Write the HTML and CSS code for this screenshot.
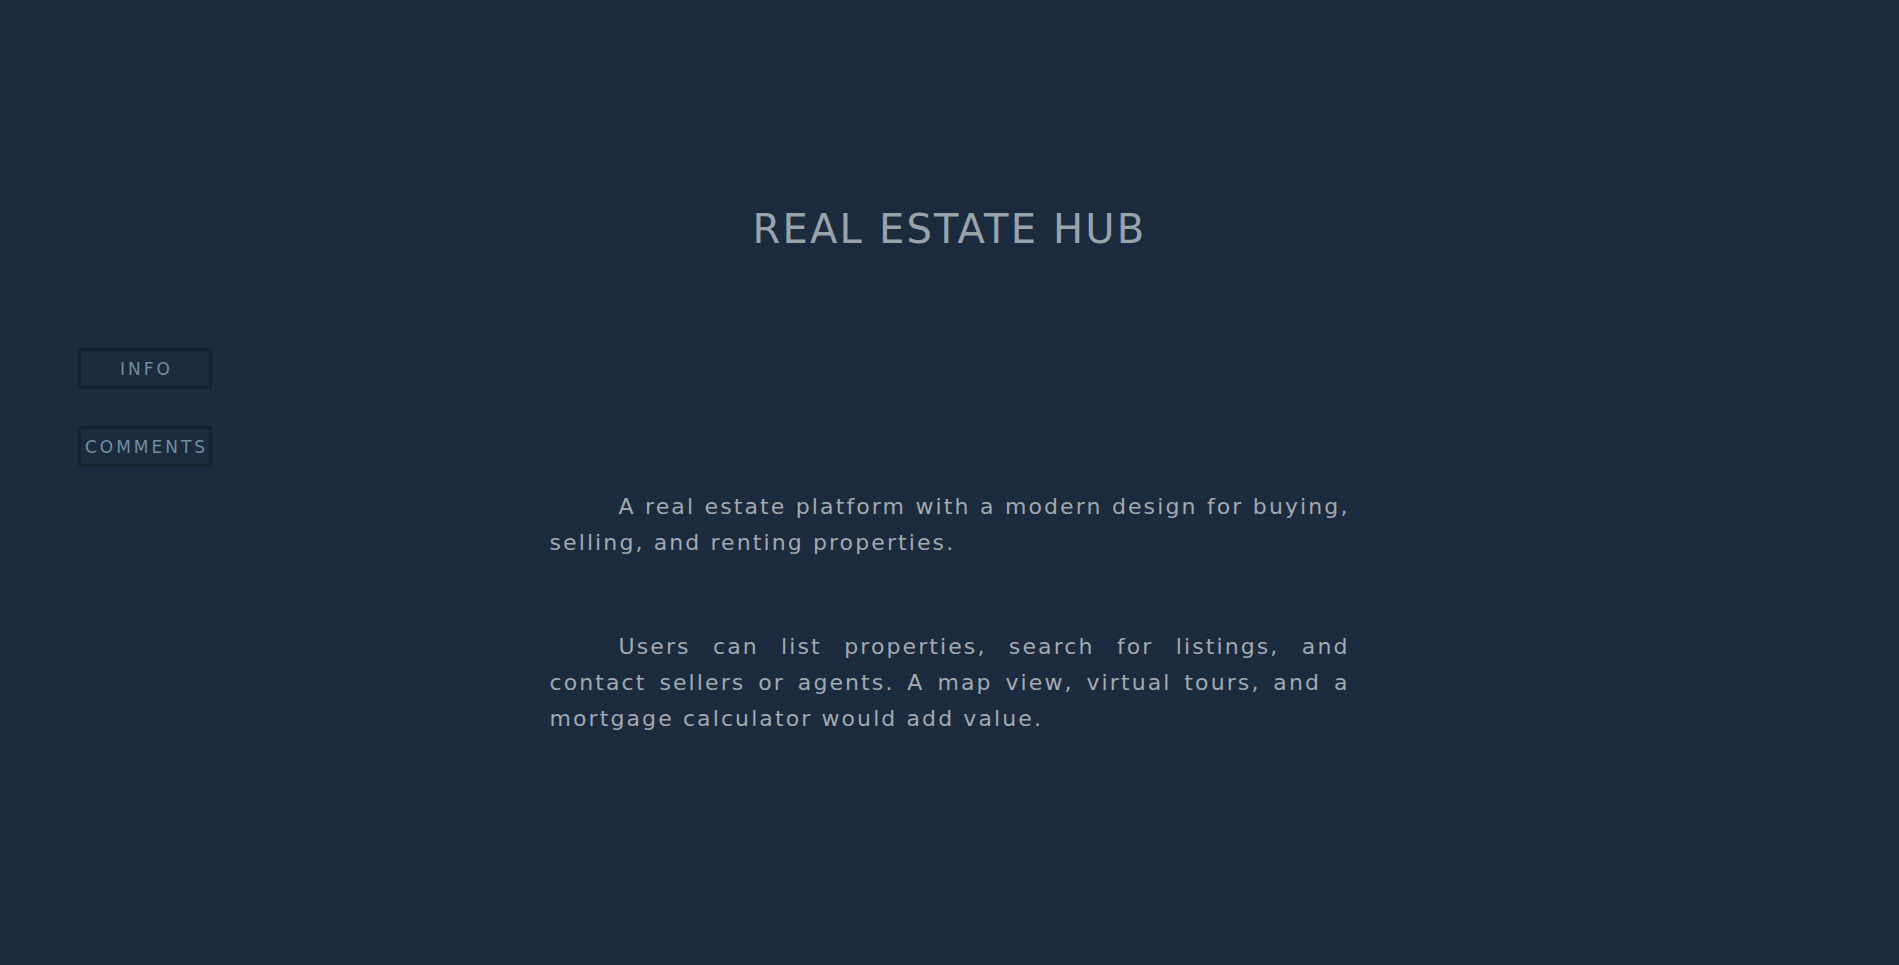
FILE: index.html
```html
<!DOCTYPE html>
<html lang="en">
<head>
<meta charset="utf-8">
<title>Real Estate Hub</title>
<link rel="stylesheet" href="styles.css">
</head>
<body>
<header class="header">
  <h1 class="title">REAL ESTATE HUB</h1>
</header>
<div class="layout">
  <nav class="sidebar">
    <button class="nav-btn">INFO</button>
    <button class="nav-btn">COMMENTS</button>
  </nav>
  <main class="content">
    <p class="para">A real estate platform with a modern design for buying, selling, and renting properties.</p>
    <p class="para">Users can list properties, search for listings, and contact sellers or agents. A map view, virtual tours, and a mortgage calculator would add value.</p>
  </main>
  <div class="spacer"></div>
</div>
</body>
</html>
```

FILE: styles.css
```css
html, body {
  margin: 0;
  padding: 0;
  background: #1c2b3e;
  min-height: 100%;
}
body {
  font-family: "DejaVu Sans", "Open Sans", sans-serif;
  height: 965px;
  overflow: hidden;
}
.header {
  display: flex;
  justify-content: center;
  padding-top: 209px;
}
.title {
  margin: 0;
  font-size: 40px;
  line-height: 40px;
  font-weight: 400;
  color: #9aa2aa;
  letter-spacing: 2.2px;
}
.layout {
  display: grid;
  grid-template-columns: 1fr 800px 1fr;
  margin-top: 99px;
}
.sidebar {
  display: flex;
  flex-direction: column;
  align-items: flex-start;
  gap: 37px;
  padding-left: 78px;
}
.nav-btn {
  width: 134px;
  height: 41px;
  box-sizing: border-box;
  background: transparent;
  border: 3px solid #15222f;
  border-radius: 3px;
  color: #6f8fa0;
  font-family: "DejaVu Sans", "Open Sans", sans-serif;
  font-size: 17px;
  letter-spacing: 3px;
  padding: 0 0 0 3px;
  display: flex;
  align-items: center;
  justify-content: center;
}
.content {
  padding-top: 141px;
}
.para {
  margin: 0 0 68px 0;
  font-size: 22px;
  line-height: 36px;
  color: #a3a9ae;
  text-align: justify;
  text-indent: 69px;
  letter-spacing: 2.1px;
}
```
